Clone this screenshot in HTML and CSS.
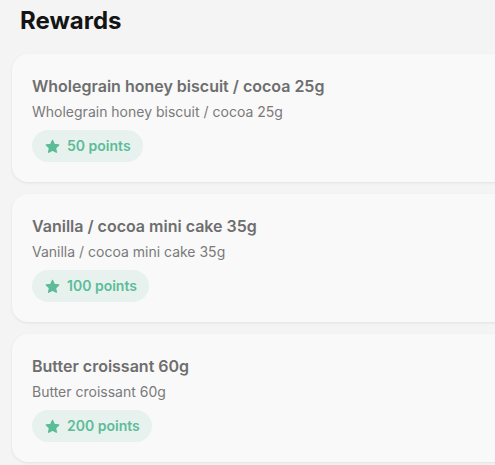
FILE: index.html
```html
<!DOCTYPE html>
<html lang="en">
<head>
  <meta charset="UTF-8">
  <meta name="viewport" content="width=device-width, initial-scale=1.0">
  <title>Rewards</title>
  <link rel="stylesheet" href="styles.css">
</head>
<body>
  <div class="page">
    <h1>Rewards</h1>

    <!-- Reward list -->
    <div class="reward-list">
      <div class="reward-card">
        <h2>Wholegrain honey biscuit / cocoa 25g</h2>
        <p>Wholegrain honey biscuit / cocoa 25g</p>
        <span class="points">
          <svg viewBox="0 0 24 24" width="17" height="17"><path d="M12 3.5l2.6 5.6 6.1.7-4.5 4.2 1.2 6L12 17l-5.4 3 1.2-6-4.5-4.2 6.1-.7z"/></svg>
          50 points
        </span>
      </div>

      <div class="reward-card">
        <h2>Vanilla / cocoa mini cake 35g</h2>
        <p>Vanilla / cocoa mini cake 35g</p>
        <span class="points">
          <svg viewBox="0 0 24 24" width="17" height="17"><path d="M12 3.5l2.6 5.6 6.1.7-4.5 4.2 1.2 6L12 17l-5.4 3 1.2-6-4.5-4.2 6.1-.7z"/></svg>
          100 points
        </span>
      </div>

      <div class="reward-card">
        <h2>Butter croissant 60g</h2>
        <p>Butter croissant 60g</p>
        <span class="points">
          <svg viewBox="0 0 24 24" width="17" height="17"><path d="M12 3.5l2.6 5.6 6.1.7-4.5 4.2 1.2 6L12 17l-5.4 3 1.2-6-4.5-4.2 6.1-.7z"/></svg>
          200 points
        </span>
      </div>
    </div>
  </div>
</body>
</html>
```

FILE: styles.css
```css
/* Global Styles */
* {
  margin: 0;
  padding: 0;
  box-sizing: border-box;
}
body {
  font-family: 'Inter', 'Noto Sans', sans-serif;
  background-color: #f4f4f4;
  color: #333;
  overflow: hidden;
}
.page {
  padding: 5px 12px;
}
.page h1 {
  font-size: 24px;
  line-height: 32px;
  font-weight: 700;
  color: #141414;
  padding-left: 8px;
  margin-bottom: 17px;
}

/* Reward Cards */
.reward-list {
  display: flex;
  flex-direction: column;
  gap: 12px;
  width: 520px;
}
.reward-card {
  background: #f9f9f9;
  border-radius: 16px;
  padding: 20px;
  box-shadow: 0 1px 3px rgba(0, 0, 0, 0.08);
  display: flex;
  flex-direction: column;
  align-items: flex-start;
}
.reward-card h2 {
  font-size: 16px;
  line-height: 24px;
  font-weight: 600;
  color: #6e6e6e;
}
.reward-card p {
  font-size: 14px;
  line-height: 20px;
  color: #7a7a7a;
  margin-top: 4px;
}
.points {
  display: flex;
  align-items: center;
  gap: 6px;
  margin-top: 8px;
  padding: 6px 12px;
  border-radius: 16px;
  background: #e7f2ee;
  color: #5cbc98;
  font-size: 14px;
  line-height: 20px;
  font-weight: 600;
}
.points svg {
  fill: #5cbc98;
  stroke: #5cbc98;
  stroke-width: 2;
  stroke-linejoin: round;
}
```
